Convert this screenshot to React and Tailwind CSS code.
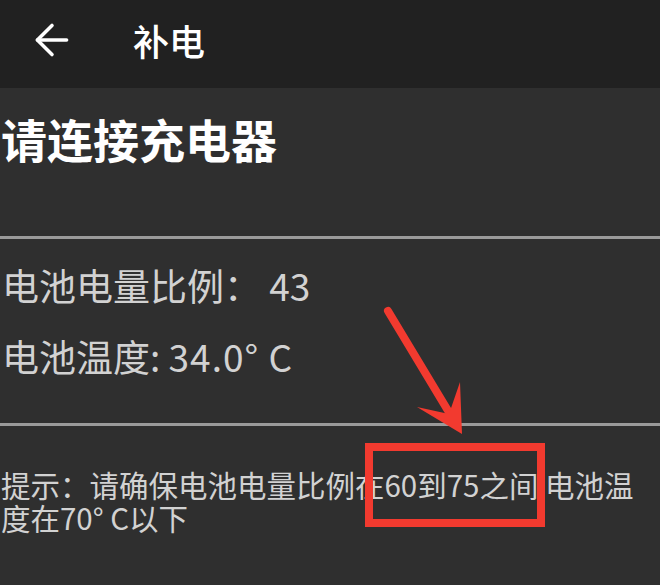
import { ArrowLeft } from 'lucide-react';

const font = { fontFamily: '"Noto Sans CJK SC", "Noto Sans", sans-serif' };

const Annotation = () => (
  <svg className="absolute inset-0 pointer-events-none" width="660" height="585" viewBox="0 0 660 585">
    <line x1="388" y1="311" x2="450" y2="414" stroke="#f23a2f" strokeWidth="8" strokeLinecap="round" />
    <polygon points="462,434 417,407 449,414 460,382" fill="#f23a2f" />
    <rect x="369" y="447" width="172" height="76" fill="none" stroke="#f23a2f" strokeWidth="8" />
  </svg>
);

export default function App() {
  return (
    <div className="relative w-[660px] h-[585px] overflow-hidden bg-[#2f2f2f]" style={font}>
      <header className="h-[88px] pb-[8px] bg-[#212121] flex items-center">
        <ArrowLeft className="ml-[27px] text-white" size={50} strokeWidth={1.7} />
        <h2 className="ml-[56px] text-[36px] leading-none text-white font-medium">补电</h2>
      </header>

      <section className="h-[148px] pt-[27px] pl-[1px]">
        <h1 className="text-[46px] leading-none font-bold text-white">请连接充电器</h1>
      </section>
      <div className="h-[3px] bg-[#9a9a9a]" />

      <section className="h-[184px] pt-[11px] pl-[2px] text-[37px] leading-[71px] text-[#d2d2d2]">
        <p>电池电量比例：&nbsp;43</p>
        <p>电池温度: <span className="tracking-[1px]">34.0° C</span></p>
      </section>
      <div className="h-[3px] bg-[#9a9a9a]" />

      <section className="pt-[42px] pl-[1px] pr-[10px] text-[29.5px] leading-[33px] text-[#d2d2d2]">
        <p>提示：请确保电池电量比例在60到75之间 电池温度在70° C以下</p>
      </section>

      <Annotation />
    </div>
  );
}
